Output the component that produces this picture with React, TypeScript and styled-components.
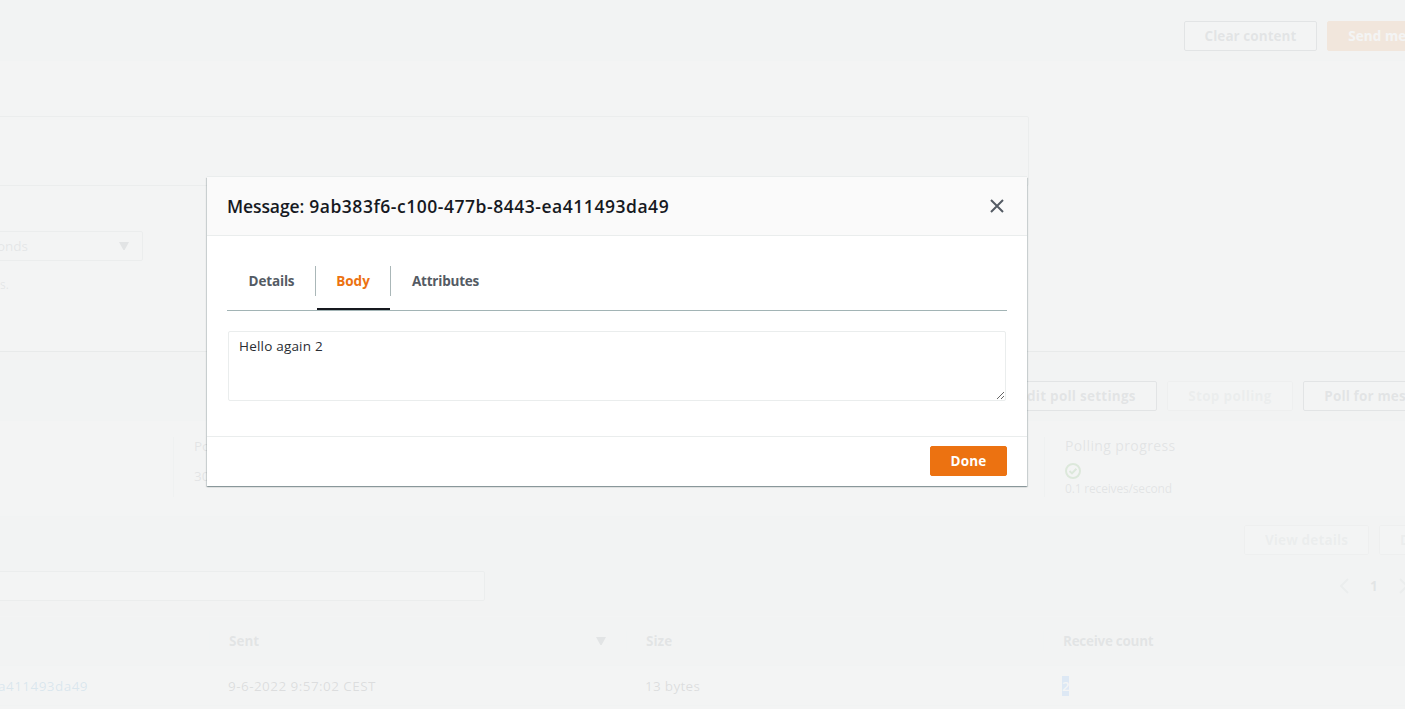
import React from "react";
import styled, { createGlobalStyle } from "styled-components";

const GlobalStyle = createGlobalStyle`
  * { box-sizing: border-box; }
  html, body { margin: 0; padding: 0; }
  body {
    font-family: "Open Sans", "Noto Sans", sans-serif;
    font-size: 14px;
    line-height: 20px;
    color: #16191f;
    background: #ffffff;
  }
  svg { flex: none; display: block; }
`;

const Viewport = styled.div`
  position: relative;
  width: 100%;
  height: 709px;
  overflow: hidden;
`;

/* The console page is wider than the window and scrolled sideways. */
const Page = styled.main`
  width: 1773px;
  margin-left: -300px;
  display: flex;
  flex-direction: column;
`;

const Text = styled.span<{ $size?: number; $weight?: number; $spacing?: number; $color?: string }>`
  font-size: ${(p) => p.$size ?? 13.5}px;
  font-weight: ${(p) => p.$weight ?? 400};
  letter-spacing: ${(p) => p.$spacing ?? 0}px;
  color: ${(p) => p.$color ?? "inherit"};
  white-space: nowrap;
`;

const PanelHeader = styled.header<{ $height: number; $top: number }>`
  display: flex;
  justify-content: flex-end;
  gap: 10px;
  height: ${(p) => p.$height}px;
  padding: ${(p) => p.$top}px 8px 0 0;
  background: #f3f3f3;
  border-bottom: 1px solid #eaeded;
`;

const Button = styled.button<{ $width: number; $variant?: "primary" | "disabled" | "normal" }>`
  flex: none;
  width: ${(p) => p.$width}px;
  height: 30px;
  padding: 0;
  display: flex;
  align-items: center;
  justify-content: center;
  border-radius: 2px;
  font-family: inherit;
  border: 1px solid
    ${(p) => (p.$variant === "primary" ? "#ec7211" : p.$variant === "disabled" ? "#c9cdcd" : "#545b64")};
  background: ${(p) => (p.$variant === "primary" ? "#ec7211" : "#ffffff")};
  color: ${(p) => (p.$variant === "primary" ? "#ffffff" : p.$variant === "disabled" ? "#aab7b8" : "#545b64")};
`;

const SendBody = styled.section`
  height: 291px;
  padding-top: 55px;
  background: #ffffff;
  border-bottom: 1px solid #8f9696;
`;

const AttributeBox = styled.div`
  width: 1329px;
  height: 70px;
  border: 1px solid #aab7b8;
  border-radius: 2px;
`;

const DelaySelect = styled.div`
  width: 163px;
  height: 30px;
  margin: 45px 0 0 280px;
  padding: 0 13px 0 0;
  display: flex;
  align-items: center;
  justify-content: flex-end;
  gap: 91px;
  border: 1px solid #aab7b8;
  border-radius: 2px;
  color: #687078;
`;

const Hint = styled.div`
  width: 309px;
  margin-top: 13px;
  text-align: right;
  color: #687078;
`;

const PollStats = styled.section`
  display: flex;
  height: 95px;
  padding: 16px 0 0 473px;
  background: #ffffff;
`;

const Stat = styled.div<{ $width: number }>`
  width: ${(p) => p.$width}px;
  height: 60px;
  padding-left: 20px;
  border-left: 1px solid #d5dbdb;
  color: #545b64;
`;

const StatLabel = styled.div`
  height: 20px;
  margin-top: -1px;
`;

const StatValue = styled.div`
  height: 20px;
  margin-top: 10px;
`;

const StatStatus = styled.div`
  display: flex;
  flex-direction: column;
  margin-top: 7px;
`;

const Toolbar = styled.div`
  height: 101px;
  padding-top: 8px;
  background: #f3f3f3;
  border-top: 1px solid #eaeded;
  border-bottom: 1px solid #ffffff;
`;

const ToolbarActions = styled.div`
  display: flex;
  justify-content: flex-end;
  gap: 10px;
  padding-right: 8px;
`;

const FilterRow = styled.div`
  display: flex;
  align-items: center;
  margin-top: 16px;
`;

const SearchBox = styled.div`
  width: 785px;
  height: 30px;
  background: #ffffff;
  border: 1px solid #aab7b8;
  border-radius: 2px;
`;

const Pager = styled.div`
  display: flex;
  align-items: center;
  margin-left: 855px;
  gap: 21px;
`;

const columns = "509px 417px 417px 1fr";

const HeadRow = styled.div`
  display: grid;
  grid-template-columns: ${columns};
  align-items: center;
  height: 49px;
  background: #f3f3f3;
  border-bottom: 1px solid #eaeded;
`;

const HeadCell = styled.div`
  display: flex;
  align-items: center;
  justify-content: space-between;
  height: 20px;
  padding: 0 20px 0 19px;
  border-left: 1px solid #eaeded;
  color: #545b64;
`;

const BodyRow = styled.div`
  display: grid;
  grid-template-columns: ${columns};
  align-items: center;
  height: 40px;
  background: #ffffff;
  border-bottom: 1px solid #eaeded;
`;

const BodyCell = styled.div`
  padding-left: 19px;
`;

const IdCell = styled.div`
  width: 388px;
  text-align: right;
`;

const Selected = styled.mark`
  display: inline-block;
  height: 20px;
  background: #1f80ff;
  color: #ffffff;
`;

const Overlay = styled.div`
  position: absolute;
  inset: 0;
  padding: 177px 0 0 207px;
  background: rgba(242, 243, 243, 0.9);
`;

const Dialog = styled.div`
  width: 820px;
  height: 309px;
  display: flex;
  flex-direction: column;
  background: #ffffff;
  box-shadow:
    0 -1px 0 0 #eaeded,
    0 1px 1px 0 rgba(0, 28, 36, 0.25),
    1px 1px 1px 0 rgba(0, 28, 36, 0.13),
    -1px 1px 1px 0 rgba(0, 28, 36, 0.13);
`;

const DialogHeader = styled.div`
  display: flex;
  align-items: center;
  justify-content: space-between;
  height: 59px;
  padding: 0 23px 0 20px;
  background: #fafafa;
  border-bottom: 1px solid #eaeded;
`;

const DialogTitle = styled.h2`
  display: flex;
  gap: 5px;
  margin: 0 0 1px;
  font-weight: 600;
`;

const DialogBody = styled.div`
  flex: 1;
  padding: 30px 20px 0;
`;

const Tabs = styled.div`
  display: flex;
  height: 45px;
  border-bottom: 1px solid #a2b4b5;
`;

const Tab = styled.div<{ $width: number; $active?: boolean }>`
  position: relative;
  width: ${(p) => p.$width}px;
  height: 30px;
  padding-left: 1px;
  display: flex;
  align-items: center;
  justify-content: center;
  color: ${(p) => (p.$active ? "#ec7211" : "#545b64")};
  & + & {
    padding-left: 0;
    border-left: 1px solid #aab7b8;
  }
  &::after {
    content: "";
    display: ${(p) => (p.$active ? "block" : "none")};
    position: absolute;
    left: 1px;
    right: 0;
    top: 42px;
    height: 2px;
    background: #16191f;
  }
`;

const MessageBody = styled.textarea`
  display: block;
  width: 778px;
  height: 70px;
  margin: 20px 0 0 1px;
  padding: 4px 10px;
  border: 1px solid #eaeded;
  border-radius: 2px;
  resize: vertical;
  outline: none;
  font: 400 13.5px/20px "Open Sans", "Noto Sans", sans-serif;
  letter-spacing: 0.2px;
  color: #2a2d33;
`;

const DialogFooter = styled.div`
  display: flex;
  justify-content: flex-end;
  height: 50px;
  padding: 9px 20px 0;
  border-top: 1px solid #eaeded;
`;

const Triangle = () => (
  <svg width="10" height="8" viewBox="0 0 10 8">
    <path d="M0 0H10L5.6 8H4.4Z" fill="#545b64" />
  </svg>
);

const Chevron = ({ right }: { right?: boolean }) => (
  <svg width="9" height="16" viewBox="0 0 9 16" fill="none" stroke="#aab7b8" strokeWidth="2">
    <path d={right ? "M1 1L8 8L1 15" : "M8 1L1 8L8 15"} />
  </svg>
);

const Check = () => (
  <svg width="16" height="16" viewBox="0 0 16 16" fill="none" stroke="#1d8102" strokeWidth="2">
    <circle cx="8" cy="8" r="7" />
    <path d="M4.5 8L7 10.4L11.4 5.8" />
  </svg>
);

const Close = () => (
  <svg width="14" height="14" viewBox="0 0 14 14" fill="none" stroke="#545b64" strokeWidth="2">
    <path d="M1 1L13 13M13 1L1 13" />
  </svg>
);

export default function App() {
  return (
    <>
      <GlobalStyle />
      <Viewport>
        <Page>
          <PanelHeader $height={61} $top={21}>
            <Button $width={133}>
              <Text $weight={700} $spacing={0.05}>Clear content</Text>
            </Button>
            <Button $width={138} $variant="primary">
              <Text $weight={700} $spacing={0.05}>Send message</Text>
            </Button>
          </PanelHeader>
          <SendBody>
            <AttributeBox />
            <DelaySelect>
              <Text>Seconds</Text>
              <Triangle />
            </DelaySelect>
            <Hint>
              <Text $size={12}>Should be between 0 seconds and 15 minutes.</Text>
            </Hint>
          </SendBody>
          <PanelHeader $height={69} $top={29}>
            <Button $width={159}>
              <Text $weight={700} $spacing={0.25}>Edit poll settings</Text>
            </Button>
            <Button $width={126} $variant="disabled">
              <Text $weight={700} $spacing={0.35}>Stop polling</Text>
            </Button>
            <Button $width={162}>
              <Text $weight={700} $spacing={0.15}>Poll for messages</Text>
            </Button>
          </PanelHeader>
          <PollStats>
            <Stat $width={871}>
              <StatLabel>
                <Text>Polling duration</Text>
              </StatLabel>
              <StatValue>
                <Text>30</Text>
              </StatValue>
            </Stat>
            <Stat $width={400}>
              <StatLabel>
                <Text $size={14} $spacing={0.38}>Polling progress</Text>
              </StatLabel>
              <StatStatus>
                <Check />
                <Text $size={12} $spacing={-0.17}>0.1 receives/second</Text>
              </StatStatus>
            </Stat>
          </PollStats>
          <Toolbar>
            <ToolbarActions>
              <Button $width={125} $variant="disabled">
                <Text $weight={700} $spacing={0.15}>View details</Text>
              </Button>
              <Button $width={86} $variant="disabled">
                <Text $weight={700}>Delete</Text>
              </Button>
            </ToolbarActions>
            <FilterRow>
              <SearchBox />
              <Pager>
                <Chevron />
                <Text $weight={700} $color="#545b64">1</Text>
                <Chevron right />
              </Pager>
            </FilterRow>
          </Toolbar>
          <HeadRow>
            <span />
            <HeadCell>
              <Text $weight={700}>Sent</Text>
              <Triangle />
            </HeadCell>
            <HeadCell>
              <Text $weight={700}>Size</Text>
            </HeadCell>
            <HeadCell>
              <Text $weight={700} $spacing={-0.28}>Receive count</Text>
            </HeadCell>
          </HeadRow>
          <BodyRow>
            <IdCell>
              <Text $spacing={0.45} $color="#0073bb">9ab383f6-c100-477b-8443-ea411493da49</Text>
            </IdCell>
            <BodyCell>
              <Text $spacing={0.45}>9-6-2022 9:57:02 CEST</Text>
            </BodyCell>
            <BodyCell>
              <Text $spacing={0.3}>13 bytes</Text>
            </BodyCell>
            <BodyCell>
              <Selected>
                <Text $weight={600} $size={13}>2</Text>
              </Selected>
            </BodyCell>
          </BodyRow>
        </Page>
        <Overlay>
          <Dialog>
            <DialogHeader>
              <DialogTitle>
                <Text $size={17.5} $weight={600} $spacing={-0.1}>Message:</Text>
                <Text $size={17.5} $weight={600} $spacing={0.53}>9ab383f6-c100-477b-8443-ea411493da49</Text>
              </DialogTitle>
              <Close />
            </DialogHeader>
            <DialogBody>
              <Tabs>
                <Tab $width={88}>
                  <Text $weight={700} $spacing={-0.15}>Details</Text>
                </Tab>
                <Tab $width={75} $active>
                  <Text $weight={700}>Body</Text>
                </Tab>
                <Tab $width={110}>
                  <Text $weight={700} $spacing={-0.22}>Attributes</Text>
                </Tab>
              </Tabs>
              <MessageBody defaultValue="Hello again 2" spellCheck={false} />
            </DialogBody>
            <DialogFooter>
              <Button $width={77} $variant="primary">
                <Text $weight={700} $spacing={0.15}>Done</Text>
              </Button>
            </DialogFooter>
          </Dialog>
        </Overlay>
      </Viewport>
    </>
  );
}
